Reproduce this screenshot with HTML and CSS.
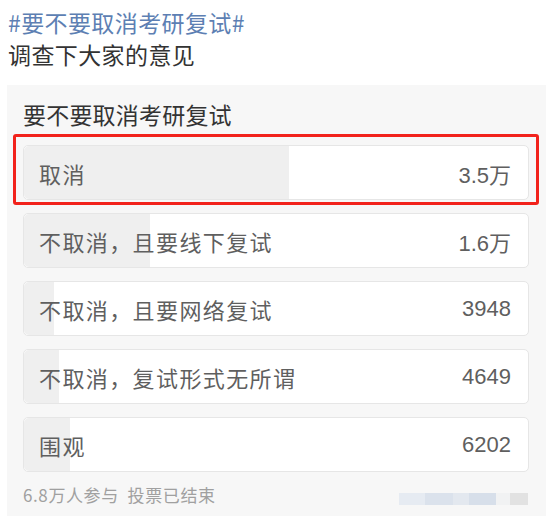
FILE: index.html
```html
<!DOCTYPE html>
<html lang="zh-CN">
<head>
    <meta charset="UTF-8">
    <meta name="viewport" content="width=device-width, initial-scale=1.0">
    <title>要不要取消考研复试</title>
    <link rel="stylesheet" href="styles.css">
</head>
<body>
    <div class="post">
        <p class="topic">#要不要取消考研复试#</p>
        <p class="text">调查下大家的意见</p>
    </div>

    <div class="poll">
        <h3 class="poll-title">要不要取消考研复试</h3>

        <div class="options">
            <div class="option marked">
                <div class="fill" style="width: 52.6%"></div>
                <span class="label">取消</span>
                <span class="count">3.5万</span>
            </div>
            <div class="option">
                <div class="fill" style="width: 25%"></div>
                <span class="label">不取消，且要线下复试</span>
                <span class="count">1.6万</span>
            </div>
            <div class="option">
                <div class="fill" style="width: 6%"></div>
                <span class="label">不取消，且要网络复试</span>
                <span class="count">3948</span>
            </div>
            <div class="option">
                <div class="fill" style="width: 6.9%"></div>
                <span class="label">不取消，复试形式无所谓</span>
                <span class="count">4649</span>
            </div>
            <div class="option">
                <div class="fill" style="width: 9.1%"></div>
                <span class="label">围观</span>
                <span class="count">6202</span>
            </div>
        </div>

        <div class="poll-footer">
            <span class="stats">6.8万人参与&nbsp;&nbsp;投票已结束</span>
            <span class="blurred">
                <i class="b1"></i><i class="b2"></i><i class="b3"></i><i class="b4"></i><i class="b5"></i><i class="b6"></i>
            </span>
        </div>
    </div>
</body>
</html>
```

FILE: styles.css
```css
body {
    margin: 0;
    background: #fff;
    font-family: "Noto Sans CJK SC", "Noto Sans", sans-serif;
    color: #333;
}

.post {
    padding: 6px 8px 0 8px;
}

.post p {
    margin: 0;
    font-size: 23px;
    line-height: 32px;
    letter-spacing: 0.4px;
}

.topic {
    color: #5d7fb3;
}

.text {
    color: #333;
}

/* 投票卡片 */
.poll {
    margin: 15px 8px 7px 7px;
    padding: 0 17px 0 16px;
    background: #f7f7f7;
}

.poll-title {
    margin: 0;
    padding: 14px 0 0 0;
    font-size: 23px;
    font-weight: normal;
    line-height: 30px;
    letter-spacing: 0.2px;
    color: #333;
    height: 46px;
}

.options {
    display: flex;
    flex-direction: column;
    gap: 13px;
}

.option {
    position: relative;
    display: flex;
    align-items: center;
    justify-content: space-between;
    height: 53px;
    padding: 0 17px 0 15px;
    background: #fff;
    border: 1px solid #e6e6e6;
    border-radius: 5px;
    font-size: 22px;
    color: #5f5f5f;
}

.option .fill {
    position: absolute;
    top: 0;
    left: 0;
    bottom: 0;
    background: #efefef;
    border-radius: 5px 0 0 5px;
}

.option .label,
.option .count {
    position: relative;
    letter-spacing: 1.4px;
}

.option .count {
    font-family: "Liberation Sans", "Noto Sans CJK SC", sans-serif;
    font-size: 22px;
    letter-spacing: 0;
}

.option.marked::after {
    content: "";
    position: absolute;
    top: -12px;
    left: -11px;
    right: -11px;
    bottom: -6px;
    border: 3px solid #f2221c;
    border-radius: 3px;
}

.poll-footer {
    display: flex;
    justify-content: space-between;
    align-items: center;
    padding: 10px 0 10px 0;
    height: 24px;
}

.stats {
    font-size: 17px;
    letter-spacing: 0.6px;
    color: #a0a0a0;
}

.blurred {
    display: flex;
    align-items: center;
    height: 12px;
    margin-top: 10px;
    margin-right: 1px;
}

.blurred i {
    display: block;
    height: 12px;
}

.b1 { width: 26px; background: #e6ebf2; }
.b2 { width: 28px; background: #dbe2ec; }
.b3 { width: 16px; background: #e3e8ef; }
.b4 { width: 27px; background: #d7dfea; }
.b5 { width: 14px; background: #f1f2f3; }
.b6 { width: 18px; background: #e2e2e2; }
```
